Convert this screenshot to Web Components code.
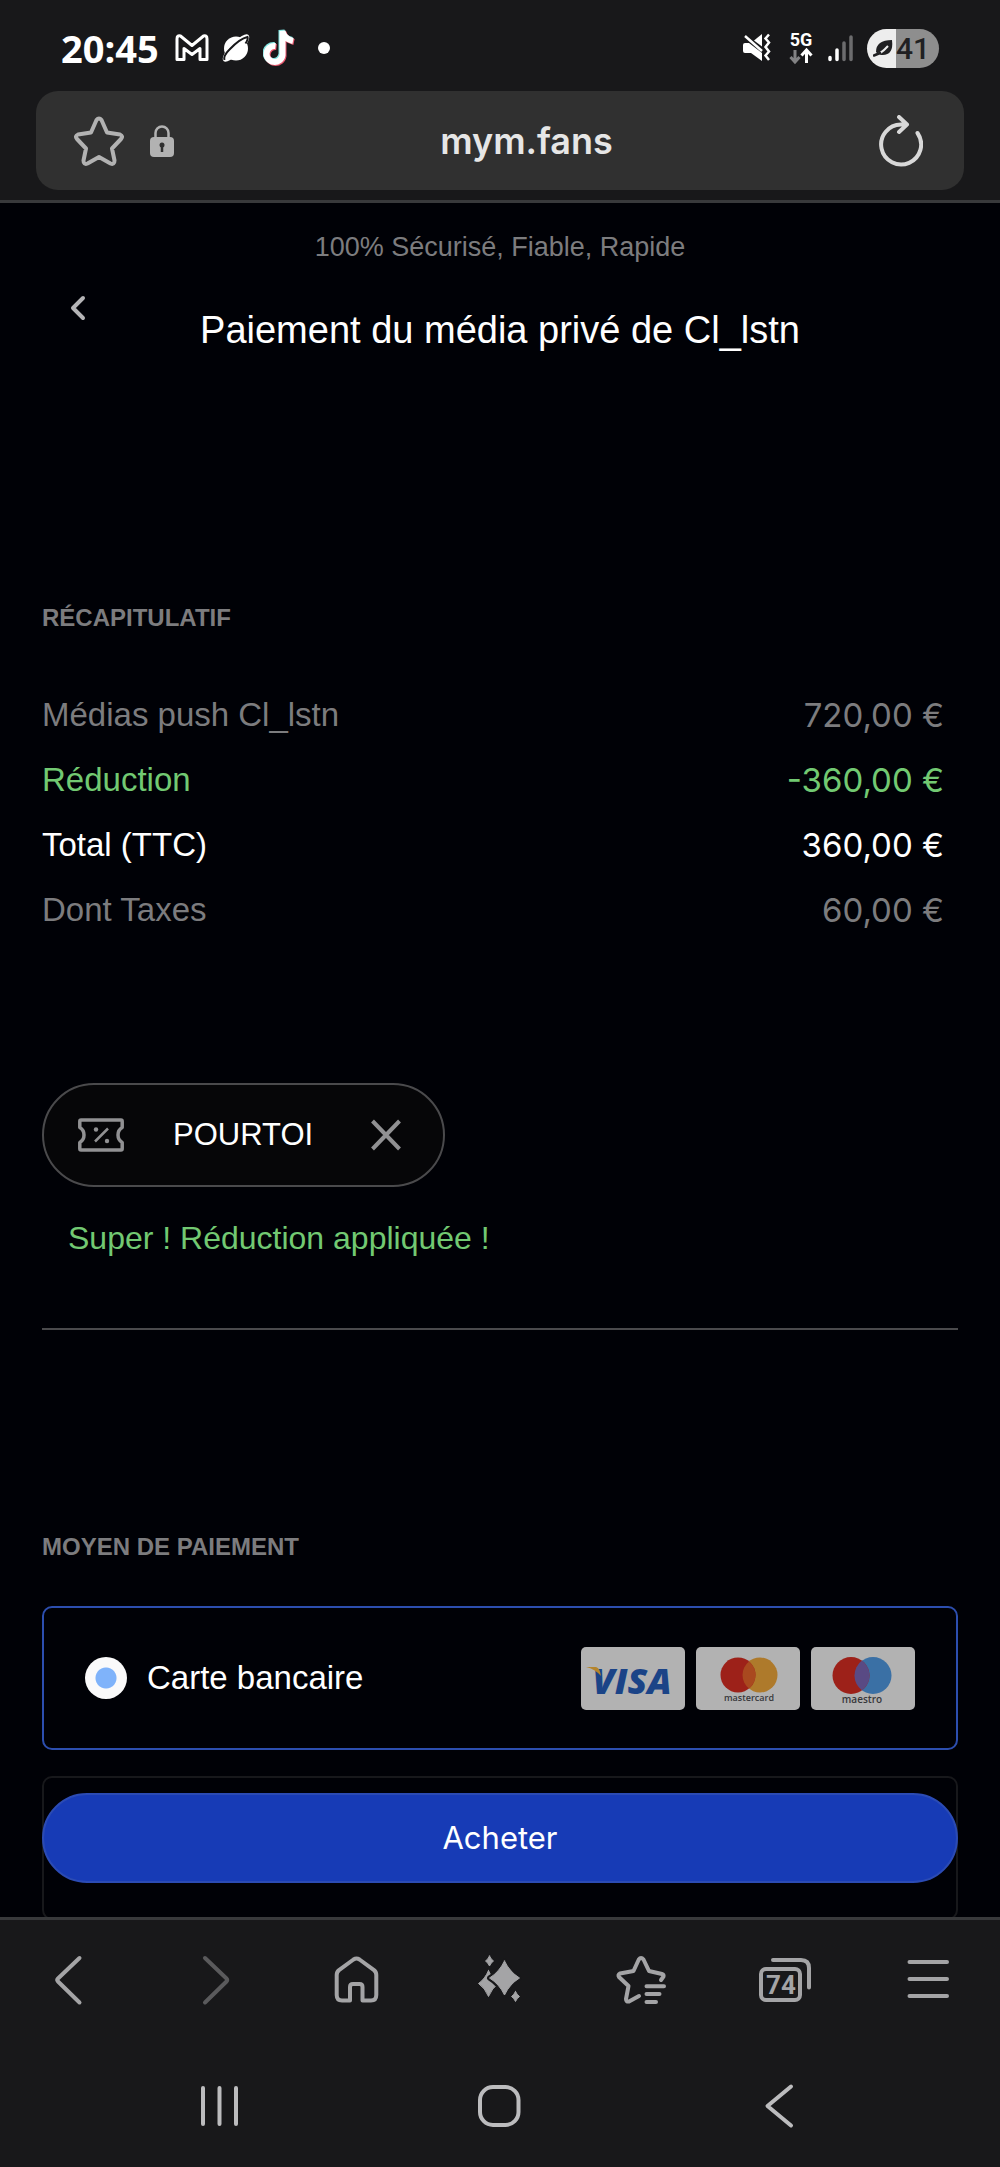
<!DOCTYPE html>
<html lang="fr">
<head>
<meta charset="utf-8">
<meta name="viewport" content="width=device-width, initial-scale=1">
<title>Paiement</title>
<style>
  html, body { margin: 0; height: 100%; background: #000106; }
  body { font-family: "Liberation Sans", Arial, sans-serif; color: #fff; }
</style>
</head>
<body>
<phone-shell>
  <status-bar slot="top" time="20:45" battery="41"></status-bar>
  <address-bar slot="top" url="mym.fans"></address-bar>

  <page-header tagline="100% Sécurisé, Fiable, Rapide">Paiement du média privé de Cl_lstn</page-header>
  <section-block class="first" heading="RÉCAPITULATIF">
    <order-summary></order-summary>
    <coupon-chip code="POURTOI">Super ! Réduction appliquée !</coupon-chip>
  </section-block>
  <section-block heading="MOYEN DE PAIEMENT" ruled>
    <payment-option checked>Carte bancaire</payment-option>
    <payment-option></payment-option>
  </section-block>

  <buy-button slot="action">Acheter</buy-button>
  <browser-nav slot="bottom" tabs="74"></browser-nav>
  <system-nav slot="bottom"></system-nav>
</phone-shell>

<script>
  const define = (name, render) => customElements.define(name, class extends HTMLElement {
    constructor() { super(); this.attachShadow({ mode: 'open' }); }
    connectedCallback() {
      this.shadowRoot.innerHTML = BASE + render(this);
    }
  });

  const BASE = `<style>
    :host { display: block; box-sizing: border-box; }
    * { box-sizing: border-box; }
    button { margin: 0; padding: 0; border: 0; background: none; color: inherit; font: inherit;
             display: flex; align-items: center; justify-content: center; cursor: pointer; }
    svg { display: block; flex: none; }
    .line { fill: none; stroke: currentColor; stroke-width: 4; stroke-linecap: round; stroke-linejoin: round; }
  </style>`;

  define('phone-shell', () => `
    <style>
      :host { display: flex; flex-direction: column; height: 100vh; }
      header { background: #18181a; border-bottom: 3px solid #38393b; padding-bottom: 10px; }
      .view { flex: 1; min-height: 0; position: relative; display: flex; }
      main { flex: 1; min-width: 0; overflow-y: auto; scrollbar-width: none; padding: 26px 42px 0; }
      .action { position: absolute; left: 42px; right: 42px; bottom: 34px; }
      footer { background: #18181a; border-top: 3px solid #38393b; padding: 30px 0 31px; display: grid; gap: 66px; }
    </style>
    <header><slot name="top"></slot></header>
    <div class="view">
      <main><slot></slot></main>
      <div class="action"><slot name="action"></slot></div>
    </div>
    <footer><slot name="bottom"></slot></footer>`);

  define('status-bar', el => `
    <style>
      :host { display: flex; justify-content: space-between; height: 91px; padding: 5px 61px 0 61px; color: #fff; }
      .side { display: flex; align-items: center; }
      .time { font: 700 38px/44px "Open Sans", sans-serif; }
      .left { gap: 12px; } .left .time { margin-right: 4px; }
      .right { gap: 14px; }
      .battery { width: 72px; height: 39px; border-radius: 20px; display: flex; align-items: center; gap: 2px; padding-left: 6px;
        background: linear-gradient(90deg, #ededed 29px, #8e8e8e 29px); color: #202022; font: 500 30px/39px Roboto, sans-serif; }
    </style>
    <div class="side left">
      <span class="time">${el.getAttribute('time')}</span>
      <svg width="34" height="28" viewBox="0 0 34 28"><path d="M2 5Q2 1 5.500 2L17 11.500 28.500 2Q32 1 32 5V25.500H25V14.500L17 20.500 9 14.500V25.500H2Z" fill="none" stroke="#fff" stroke-width="3" stroke-linejoin="round"/></svg>
      <svg width="30" height="30" viewBox="0 0 30 30"><circle cx="15" cy="15.500" r="12" fill="#fff"/><ellipse cx="15" cy="15" rx="18" ry="6" transform="rotate(-46 15 15)" fill="#fff"/><path d="M3.500 27Q2 23 8.500 16.500Q19 5.500 26.500 4Q27.500 6 24.500 10.500" fill="none" stroke="#18181a" stroke-width="2"/></svg>
      <svg width="32" height="38" viewBox="0 0 32 38" fill="none" stroke-width="6">
        <path stroke="#7fe3e0" d="M11.500 16A8 8 0 1 0 18.500 25V1Q20 9 29 11"/><path stroke="#e8576e" d="M13.500 18A8 8 0 1 0 20.500 27V3Q22 11 31 13"/><path stroke="#fff" d="M12.500 17A8 8 0 1 0 19.500 26V2Q21 10 30 12"/></svg>
      <svg width="34" height="12" viewBox="0 0 34 12"><circle cx="17" cy="6" r="6" fill="#fff"/></svg>
    </div>
    <div class="side right">
      <svg width="30" height="30" viewBox="0 0 30 30" style="margin-right:3px"><path d="M1 12Q1 10 3 10H7L20 20V28L9 20H3Q1 20 1 18Z" fill="#fff"/><path d="M12 7.500 20 1V13.500Z" fill="#fff"/><path d="M3 3 20 18" stroke="#fff" stroke-width="2.500"/><path d="M27 1.500 23.500 5.500 27 9.500 23.500 14 27 18.500 23.500 22.500 27 27" fill="none" stroke="#fff" stroke-width="2.500"/></svg>
      <svg width="25" height="48" viewBox="0 -8 25 48"><text x="12" y="14" text-anchor="middle" font-family="Roboto" font-weight="700" font-size="18" fill="#fff">5G</text><path d="M6 18V29M1.500 25 6 30 10.500 25" stroke="#828284" stroke-width="3" fill="none"/><path d="M17.500 31V19M12.500 23.500 17.500 18 22.500 23.500" stroke="#fff" stroke-width="3" fill="none"/></svg>
      <svg width="25" height="28" viewBox="0 0 25 28" stroke-width="3.500" stroke-linecap="round"><path d="M2 23.500V25.500M9 16V25.500" stroke="#fff"/><path d="M16 9V25.500M23 3V25.500" stroke="#6c6c6e"/></svg>
      <span class="battery"><svg width="21" height="20" viewBox="0 0 21 20"><path d="M3 14Q3 2 19 2Q21 18 8 17Q5 17 3 14Z" fill="#202022"/><path d="M1 17Q7 17 15 8" fill="none" stroke="#ededed" stroke-width="2"/><path d="M1 17.500 7 15" stroke="#202022" stroke-width="2.500" stroke-linecap="round"/></svg>${el.getAttribute('battery')}</span>
    </div>`);

  define('address-bar', el => `
    <style>
      :host { margin: 0 36px; }
      form { display: flex; align-items: center; height: 99px; padding: 0 41px 0 38px; border-radius: 22px; background: #303030; color: #b2b2b2; }
      input { flex: 1; min-width: 0; border: 0; padding: 0; background: none; outline: 0; text-align: center; color: #e6e6e6; font: 600 36px/44px Inter, sans-serif; }
      .lock { margin-left: 26px; }
      .reload { color: #d8d8d8; }
    </style>
    <form>
      <button type="button" aria-label="Favori"><svg class="line" width="50" height="50" viewBox="0 0 50 50"><path d="M22.500 4Q25 .8 27.500 4L33 16.500 46 18.500Q49.500 20 47 23L38 32.500 40.500 44.500Q40.500 49 36.500 47.500L25 41 13.500 47.500Q9.500 49 9.500 44.500L12 32.500 3 23Q.5 20 4 18.500L17 16.500Z"/></svg></button>
      <svg class="lock" width="24" height="32" viewBox="0 0 24 32"><rect y="12" width="24" height="20" rx="4" fill="currentColor"/><path d="M5.500 13V8a6.500 6.500 0 0 1 13 0V13" fill="none" stroke="currentColor" stroke-width="2.500"/><circle cx="12" cy="20" r="2.500" fill="#303030"/><path d="M12 20V27" stroke="#303030" stroke-width="2.500"/></svg>
      <input type="text" aria-label="Adresse" value="${el.getAttribute('url')}">
      <button class="reload" type="button" aria-label="Actualiser"><svg class="line" width="44" height="52" viewBox="0 0 44 52"><path d="M28 9.500H22A20 20 0 1 0 38.500 18M20 2 28 9.500 20 17"/></svg></button>
    </form>`);

  define('page-header', el => `
    <style>
      p { margin: 0 0 13px; text-align: center; font-size: 27px; line-height: 36px; color: #7c7c7e; }
      .row { display: grid; grid-template-columns: 72px 1fr 72px; align-items: start; }
      button { height: 60px; color: #b4b4b6; }
      h1 { margin: 0; padding-top: 28px; text-align: center; font-weight: 400; font-size: 38px; line-height: 48px; }
    </style>
    <p>${el.getAttribute('tagline')}</p>
    <div class="row">
      <button type="button" aria-label="Retour"><svg class="line" width="16" height="26" viewBox="0 0 16 26"><path d="M13 3 3 13 13 23"/></svg></button>
      <h1><slot></slot></h1>
    </div>`);

  define('section-block', el => `
    <style>
      :host(.first) { margin-top: 248px; }
      :host([ruled]) { margin-top: 70px; padding-top: 201px; border-top: 2px solid #4a4a4c; }
      h2 { margin: 0; font-size: 24px; line-height: 32px; font-weight: 700; color: #7c7c7e; }
      :host([ruled]) h2 { margin-bottom: 43px; }
      .body { display: flex; flex-direction: column; gap: 26px; }
      :host(.first) .body { gap: 141px; margin-top: 48px; }
    </style>
    <h2>${el.getAttribute('heading')}</h2>
    <div class="body"><slot></slot></div>`);

  define('order-summary', () => `
    <style>
      table { width: 100%; border-collapse: collapse; font-size: 33px; line-height: 40px; color: #7c7c7e; }
      tr { height: 65px; }
      th, td { padding: 0; font-weight: 400; text-align: left; vertical-align: middle; }
      td { text-align: right; padding-right: 14px; font-family: Inter, sans-serif; }
      .off { color: #72c972; }
      .total { color: #fff; }
    </style>
    <table>
      <tr><th scope="row">Médias push Cl_lstn</th><td>720,00 €</td></tr>
      <tr class="off"><th scope="row">Réduction</th><td>-360,00 €</td></tr>
      <tr class="total"><th scope="row">Total (TTC)</th><td>360,00 €</td></tr>
      <tr><th scope="row">Dont Taxes</th><td>60,00 €</td></tr>
    </table>`);

  define('coupon-chip', el => `
    <style>
      .chip { display: inline-flex; align-items: center; height: 104px; padding: 0 26px 0 34px; border: 2px solid #4a4a4c; border-radius: 52px;
        background: #060608; vertical-align: top; font-size: 31px; color: #919193; }
      .code { margin: 0 42px 0 49px; color: #fff; }
      button { width: 62px; height: 62px; }
      p { margin: 31px 26px 0; font-size: 32px; line-height: 40px; color: #72c972; }
    </style>
    <div class="chip">
      <svg width="46" height="34" viewBox="0 0 46 34" fill="none" stroke="currentColor" stroke-width="3.500" stroke-linejoin="round"><path d="M3 2H43Q44.200 2 44.200 3.500V9.500Q40 12 40 17T44.200 24.500V30.500Q44.200 32 43 32H3Q1.800 32 1.800 30.500V24.500Q6 22 6 17T1.800 9.500V3.500Q1.800 2 3 2Z"/><path d="M17 23.500 30 10.500" stroke-width="2.500"/><circle cx="18" cy="11.500" r="2.200" fill="currentColor" stroke="none"/><circle cx="29" cy="23" r="2.200" fill="currentColor" stroke="none"/></svg>
      <span class="code">${el.getAttribute('code')}</span>
      <button type="button" aria-label="Retirer le code"><svg width="30" height="32" viewBox="0 0 30 32" fill="none" stroke="currentColor" stroke-width="4"><path d="M1.500 2 28.500 30M28.500 2 1.500 30"/></svg></button>
    </div>
    <p><slot></slot></p>`);

  define('card-logos', () => `
    <style>
      :host { display: flex; gap: 11px; }
      svg { border-radius: 5px; background: #b2b2b2; }
      text { font-family: "Open Sans", sans-serif; }
    </style>
    <svg width="104" height="63" viewBox="0 0 104 63" role="img"><text x="51" y="47" text-anchor="middle" font-size="36" font-weight="800" font-style="italic" fill="#1b4487">VISA</text><path d="M5 20H15Q19 21 20 29Q14 22 5 20Z" fill="#b5852c"/></svg>
    <svg width="104" height="63" viewBox="0 0 104 63" role="img"><circle cx="64" cy="28" r="17.500" fill="#ae7a2b"/><circle cx="42" cy="28" r="17.500" fill="#9d2119"/><path d="M53 14.400A17.500 17.500 0 0 1 53 41.600A17.500 17.500 0 0 1 53 14.400Z" fill="#a9491f"/><text x="53" y="54" text-anchor="middle" font-size="9" font-weight="600" fill="#37373a">mastercard</text></svg>
    <svg width="104" height="63" viewBox="0 0 104 63" role="img"><circle cx="62" cy="28.500" r="18.500" fill="#3a70a5"/><circle cx="40" cy="28.500" r="18.500" fill="#9d2119"/><path d="M51 13.600A18.500 18.500 0 0 1 51 43.400A18.500 18.500 0 0 1 51 13.600Z" fill="#594a84"/><text x="51" y="56" text-anchor="middle" font-size="10" font-weight="600" fill="#37373a">maestro</text></svg>`);

  define('payment-option', el => `
    <style>
      label { display: flex; align-items: center; gap: 20px; height: 144px; padding: 0 41px; border: 2px solid #17181b; border-radius: 10px; font-size: 33px; line-height: 40px; }
      :host([checked]) label { border-color: #2c4eae; }
      input { appearance: none; margin: 0; width: 42px; height: 42px; border-radius: 50%; background: #fafafa; }
      input:checked { background: radial-gradient(circle, #7fb3fa 10px, #fafafa 11px); }
      card-logos { margin-left: auto; }
    </style>
    <label>${el.hasAttribute('checked') ? `<input type="radio" name="method" checked><span><slot></slot></span><card-logos></card-logos>` : '<slot></slot>'}</label>`);

  define('buy-button', () => `
    <style>
      button { width: 100%; height: 90px; border: 2px solid #2b4bb4; border-radius: 45px; background: #173bb6; color: #fff; font: 400 31px/40px Inter, sans-serif; }
    </style>
    <button type="button"><slot></slot></button>`);

  const icon = (label, body, cls = '') =>
    `<button type="button" aria-label="${label}" class="${cls}"><svg class="line" width="60" height="60" viewBox="0 0 60 60">${body}</svg></button>`;
  const spark = (x, y, a, b) =>
    `<path d="M${x} ${y - b}Q${x + a * .35} ${y - b * .35} ${x + a} ${y}Q${x + a * .35} ${y + b * .35} ${x} ${y + b}Q${x - a * .35} ${y + b * .35} ${x - a} ${y}Q${x - a * .35} ${y - b * .35} ${x} ${y - b}Z"/>`;

  define('browser-nav', el => `
    <style>
      :host { display: grid; grid-template-columns: repeat(7, 1fr); color: #a4a4a6; }
      .dim { color: #5a5a5c; }
      text { font: 700 26px Roboto, sans-serif; fill: currentColor; stroke: none; }
      .fill { fill: currentColor; stroke-width: 1; }
    </style>
    ${icon('Précédent', '<path d="M38.500 8 17 28.500Q15.500 30 17 31.500L38.500 52.500"/>')}
    ${icon('Suivant', '<path d="M21 8 42.500 28.500Q44 30 42.500 31.500L21 52.500"/>', 'dim')}
    ${icon('Accueil', '<path d="M23 50.500V37Q23 34 26 34H32.500Q35.500 34 35.500 37V50.500H44Q49.300 50.500 49.300 45V25Q49.300 22 47 20.200L32.500 9.500Q29.500 7.500 26.500 9.500L12 20.200Q9.700 22 9.700 25V45Q9.700 50.500 15 50.500Z"/>')}
    ${icon('Assistant', `<g class="fill">${spark(18.500, 33.500, 10, 13)}</g><g fill="#18181a" stroke="#18181a" stroke-width="5">${spark(34.500, 28, 15, 17)}</g><g class="fill">${spark(34.500, 28, 15, 17)}${spark(19.500, 11, 4, 5)}${spark(45.500, 46.500, 4, 5)}</g>`)}
    ${icon('Favoris', '<path d="M48 30 50.500 26.500Q51 24.500 49 24L36 21 30.500 9.500Q28 6.500 25.800 9.500L20.500 21 7 23.500Q4.500 25 6 27L15.500 36 13 49Q13 52 16 51.500L26 46M33.500 36.300H51M33.500 44H46.500M33.500 52H43"/>')}
    ${icon('Onglets', `<rect x="5" y="19" width="39" height="31" rx="5"/><path d="M17 10H45Q53 10 53 18V37.500"/><text x="25" y="44" text-anchor="middle">${el.getAttribute('tabs')}</text>`)}
    ${icon('Menu', '<path d="M10.500 12H48M10.500 29H48M10.500 46H48"/>')}`);

  define('system-nav', () => `
    <style>:host { display: grid; grid-template-columns: repeat(3, 1fr); padding: 0 8%; color: #bcbcbe; }</style>
    ${icon('Applications récentes', '<path d="M13 12V48M29.500 12V48M46 12V48"/>')}
    ${icon('Écran d’accueil', '<rect x="10" y="11" width="38.500" height="38" rx="13"/>')}
    ${icon('Retour système', '<path d="M41 10.500 17.500 30 41 49.500"/>')}`);
</script>
</body>
</html>
